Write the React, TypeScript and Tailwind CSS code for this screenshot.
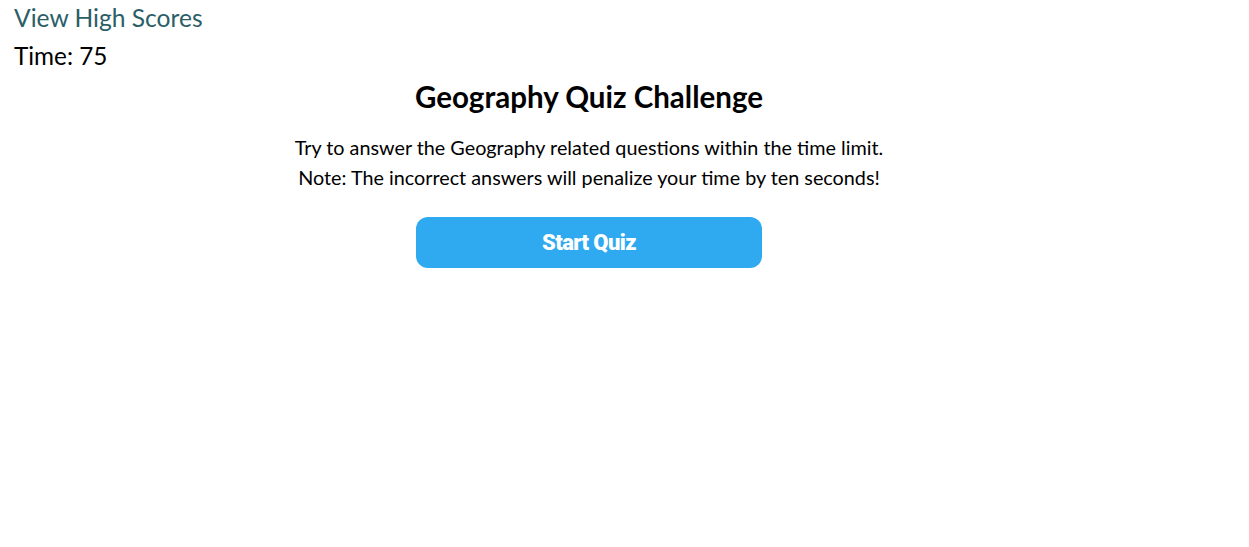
import React from 'react';

const App = () => {
    return (
        <div className="min-h-[547px] bg-white text-black" style={{ fontFamily: 'Lato, sans-serif' }}>
            <header className="px-[14px] pt-[2px]">
                <a href="#" className="block text-[24.6px] leading-[32px] text-[#2b5e66]">View High Scores</a>
                <div className="text-[24.3px] leading-[32px] mt-[6px]">Time: 75</div>
            </header>

            <main className="w-[1178px] text-center">
                <h1 className="mt-[5px] text-[29.5px] font-bold leading-[40px]">Geography Quiz Challenge</h1>
                <p className="mt-[15px] text-[19.8px] leading-[30px]">
                    Try to answer the Geography related questions within the time limit.
                    <br />
                    Note: The incorrect answers will penalize your time by ten seconds!
                </p>
                <button
                    className="mt-[25px] w-[346px] h-[51px] rounded-[12px] bg-[#2fa9ef] text-white text-[22px] font-black tracking-[-0.6px]"
                    style={{ fontFamily: 'Roboto, sans-serif' }}
                >
                    Start Quiz
                </button>
            </main>
        </div>
    );
};

export default App;
